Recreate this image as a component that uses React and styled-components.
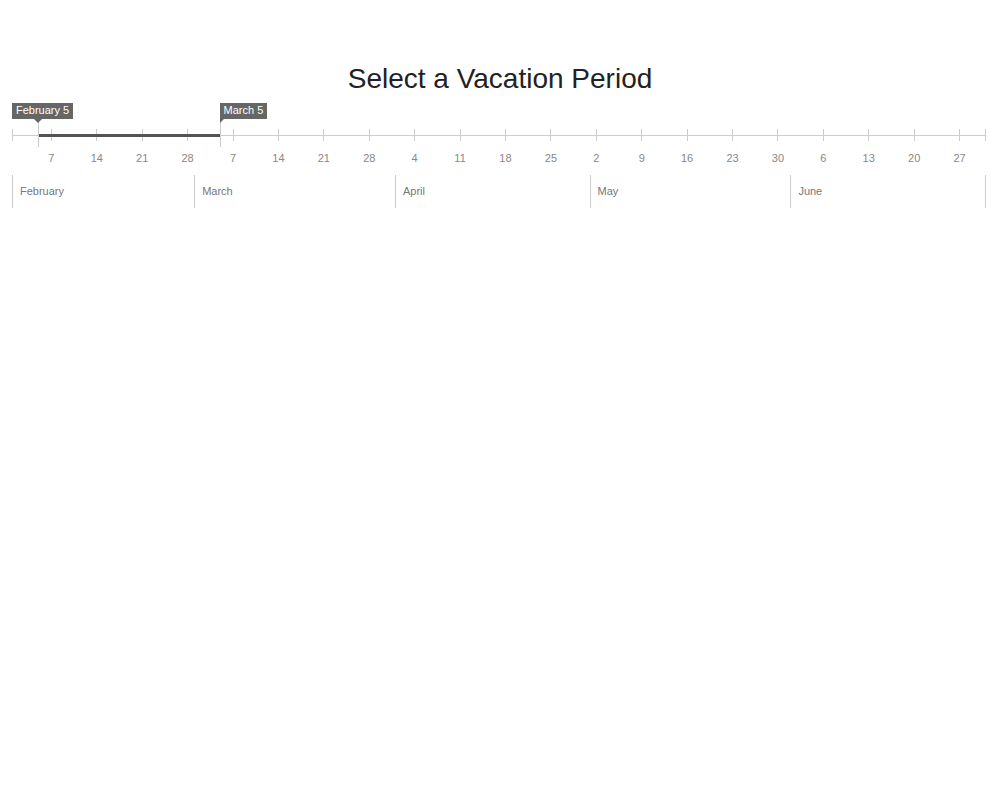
import React from "react";
import styled, { createGlobalStyle } from "styled-components";

// ---------- Data ----------
const YEAR = 2021;
const TOTAL_DAYS = 150; // Feb 1 .. Jun 30
const MONTHS = [
  { name: "February", days: 28 },
  { name: "March", days: 31 },
  { name: "April", days: 30 },
  { name: "May", days: 31 },
  { name: "June", days: 30 },
];
const WEEK_TICKS = Array.from({ length: 21 }, (_, i) => 6 + i * 7);
const RANGE = { from: 4, to: 32 }; // Feb 5 .. Mar 5

const pct = (day) => `${(day / TOTAL_DAYS) * 100}%`;
const dateOf = (day) => new Date(YEAR, 1, 1 + day);
const fmt = (day) =>
  dateOf(day).toLocaleDateString("en-US", { month: "long", day: "numeric" });

// ---------- Styled Components ----------
const GlobalStyle = createGlobalStyle`
  html, body {
    margin: 0;
    background: #ffffff;
    font-family: "Liberation Sans", Arial, sans-serif;
  }
`;

const Page = styled.div`
  display: flex;
  flex-direction: column;
`;

const Title = styled.h1`
  margin: 0 0 5px;
  padding-top: 63px;
  font-size: 28px;
  line-height: 32px;
  font-weight: normal;
  color: #222;
  text-align: center;
`;

const Timeline = styled.div`
  padding: 0 15px 0 12px;
`;

const Track = styled.div`
  position: relative;
  height: 70px;
`;

const Scale = styled.svg`
  display: block;
  width: 100%;
  height: 70px;
  overflow: visible;
  shape-rendering: crispEdges;

  text {
    font-family: "Liberation Sans", Arial, sans-serif;
    font-size: 11px;
    fill: #888;
    text-anchor: middle;
    shape-rendering: auto;
  }
`;

// tooltip-like label sitting over the scale
const HandleLabel = styled.div`
  position: absolute;
  top: 3px;
  left: ${(p) => p.$left};
  height: 16px;
  padding: 0 4px;
  background: #666;
  color: #fff;
  font-size: 11px;
  line-height: 15px;
  white-space: nowrap;

  &::after {
    content: "";
    position: absolute;
    top: 16px;
    width: 0;
    height: 0;
    border-top: 4px solid #666;
    ${(p) =>
      p.$pointer === "corner"
        ? `left: 0; border-right: 4px solid transparent;`
        : `left: ${p.$pointer}; margin-left: -4px;
           border-left: 4px solid transparent;
           border-right: 4px solid transparent;`}
  }
`;

const MonthRow = styled.div`
  display: flex;
  margin: 5px -1px 0 0;
  border-right: 1px solid #ccc;
`;

const Month = styled.div`
  flex: ${(p) => p.$days} 0 0;
  height: 33px;
  border-left: 1px solid #ccc;
  padding: 0 0 1px 7px;
  display: flex;
  align-items: center;
  font-size: 11px;
  color: #777;
  box-sizing: border-box;
`;

// ---------- Main Component ----------
const App = () => {
  return (
    <Page>
      <GlobalStyle />
      <Title>Select a Vacation Period</Title>

      <Timeline>
        <Track>
          <Scale>
            <g transform="translate(0.5 0)">
              <line x1="0" x2="100%" y1="35" y2="35" stroke="#ccc" />
              <line x1="0" x2="0" y1="29" y2="41" stroke="#ccc" />
              <line x1="100%" x2="100%" y1="29" y2="41" stroke="#ccc" />
              {WEEK_TICKS.map((d) => (
                <g key={d}>
                  <line x1={pct(d)} x2={pct(d)} y1="29" y2="41" stroke="#ccc" />
                  <text x={pct(d)} y="62">
                    {dateOf(d).getDate()}
                  </text>
                </g>
              ))}
              <line
                x1={pct(RANGE.from)}
                x2={pct(RANGE.to)}
                y1="35.5"
                y2="35.5"
                stroke="#555"
                strokeWidth="3"
              />
              <line x1={pct(RANGE.from)} x2={pct(RANGE.from)} y1="19" y2="47" stroke="#ccc" />
              <line x1={pct(RANGE.to)} x2={pct(RANGE.to)} y1="19" y2="47" stroke="#ccc" />
            </g>
          </Scale>

          <HandleLabel $left="0px" $pointer="26px">
            {fmt(RANGE.from)}
          </HandleLabel>
          <HandleLabel $left={pct(RANGE.to)} $pointer="corner">
            {fmt(RANGE.to)}
          </HandleLabel>
        </Track>

        <MonthRow>
          {MONTHS.map((m) => (
            <Month key={m.name} $days={m.days}>
              {m.name}
            </Month>
          ))}
        </MonthRow>
      </Timeline>
    </Page>
  );
};

export default App;
